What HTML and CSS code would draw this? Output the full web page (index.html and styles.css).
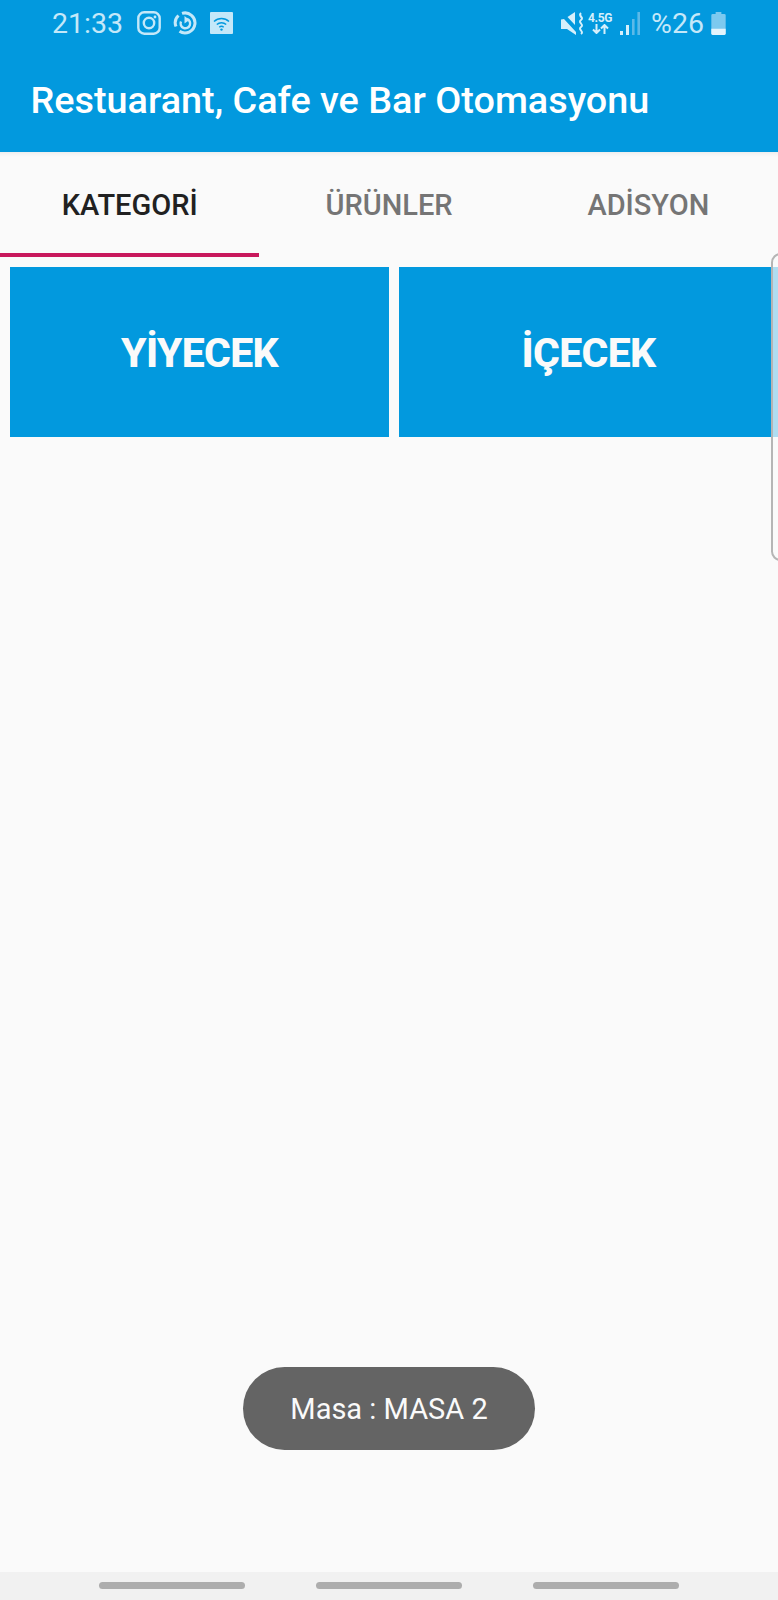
FILE: index.html
```html
<!DOCTYPE html>
<html lang="tr">
<head>
<meta charset="utf-8">
<title>Restuarant, Cafe ve Bar Otomasyonu</title>
<link rel="stylesheet" href="styles.css">
</head>
<body>
<div class="screen">
  <header class="appbar">
    <div class="status">
      <div class="status-left">
        <span class="time">21:33</span>
        <svg class="ic ic-insta" viewBox="0 0 24 24"><rect x="1.3" y="1.3" width="21.400" height="21.400" rx="6" fill="none" stroke="#c4e8f9" stroke-width="2.400"/><circle cx="12" cy="12" r="5.200" fill="none" stroke="#c4e8f9" stroke-width="2.400"/><circle cx="18" cy="6" r="1.400" fill="#c4e8f9"/></svg>
        <svg class="ic ic-sync" viewBox="0 0 24 24"><path d="M9 2.400A10 10 0 1 1 6.500 20.300" fill="none" stroke="#c4e8f9" stroke-width="3"/><path d="M3 15.500A10 10 0 0 1 5.500 4.500" fill="none" stroke="#c4e8f9" stroke-width="3"/><path d="M8 10.500A4.800 4.800 0 1 0 14 8" fill="none" stroke="#c4e8f9" stroke-width="2.400"/><path d="M11.500 5v7.500l5-3.500z" fill="#c4e8f9"/></svg>
        <svg class="ic ic-wifi" viewBox="0 0 23 22"><rect width="23" height="22" rx="1" fill="#c4e8f9"/><path d="M4 9.500a11 11 0 0 1 15 0M6.800 12.500a7 7 0 0 1 9.400 0M9.300 15.200a3.400 3.400 0 0 1 4.400 0" fill="none" stroke="#0299de" stroke-width="1.500"/><circle cx="11.500" cy="17.600" r="1.200" fill="#0299de"/></svg>
      </div>
      <div class="status-right">
        <svg class="ic ic-mute" viewBox="0 0 23 23"><path d="M0 7.500l3-.5 12 13v3L6 17H0z" fill="#d5effb"/><path d="M6.500 5L14 0v13z" fill="#d5effb"/><path d="M20 1c-3.500 3 3.500 4.500 0 7s3.500 4.500 0 7 3.500 4.500 0 7" fill="none" stroke="#d5effb" stroke-width="2"/></svg>
        <div class="net">
          <span class="net-label">4.5G</span>
          <svg class="ic-arrows" viewBox="0 0 17 10"><path d="M4.500 0v9M1 5.500L4.500 9 8 5.500M12.500 10V1M9 4.500L12.500 1 16 4.500" fill="none" stroke="#d5effb" stroke-width="2"/></svg>
        </div>
        <svg class="ic ic-signal" viewBox="0 0 20 23"><rect x="0" y="19" width="3" height="4" fill="#d5effb"/><rect x="6" y="13" width="3" height="10" fill="#d5effb"/><rect x="12" y="7" width="2.600" height="16" fill="#5cb9e8"/><rect x="17.400" y="0" width="2.600" height="23" fill="#5cb9e8"/></svg>
        <span class="battery-text">%26</span>
        <svg class="ic ic-battery" viewBox="0 0 15 24"><path d="M4.500 0h6v2h3a1.500 1.500 0 0 1 1.500 1.500V22.500a1.500 1.500 0 0 1-1.500 1.500h-12A1.500 1.500 0 0 1 0 22.500V3.500A1.500 1.500 0 0 1 1.500 2h3z" fill="#7cc9ef"/><path d="M0 17.500h15v5a1.500 1.500 0 0 1-1.500 1.500h-12A1.500 1.500 0 0 1 0 22.500z" fill="#e3f4fc"/></svg>
      </div>
    </div>
    <h1 class="title">Restuarant, Cafe ve Bar Otomasyonu</h1>
  </header>

  <nav class="tabs">
    <a class="tab tab-active">KATEGORİ</a>
    <a class="tab">ÜRÜNLER</a>
    <a class="tab">ADİSYON</a>
  </nav>

  <main class="content">
    <div class="categories">
      <button class="category">YİYECEK</button>
      <button class="category">İÇECEK</button>
    </div>
    <div class="edge-panel"></div>
    <div class="toast">Masa : MASA 2</div>
  </main>

  <footer class="navbar">
    <span class="nav-pill"></span>
    <span class="nav-pill"></span>
    <span class="nav-pill"></span>
  </footer>
</div>
</body>
</html>
```
FILE: styles.css
```css
* { box-sizing: border-box; }
html, body { margin: 0; padding: 0; }
body { font-family: Roboto, "Liberation Sans", sans-serif; background: #fafafa; overflow: hidden; }
.screen { width: 778px; height: 1600px; display: flex; flex-direction: column; overflow: hidden; }

.appbar { height: 152px; background: #0299de; color: #fff; flex: none; }
.status { height: 46px; padding: 0 52px; display: flex; justify-content: space-between; align-items: center; color: #c4e8f9; }
.status-left, .status-right { display: flex; align-items: center; }
.time { font-size: 28.500px; margin-right: 14px; }
.ic { display: block; flex: none; }
.ic-insta { width: 24px; height: 24px; margin-right: 12px; }
.ic-sync { width: 24px; height: 24px; margin-right: 13px; }
.ic-wifi { width: 23px; height: 22px; }
.ic-mute { width: 23px; height: 23px; margin-right: 4px; }
.net { width: 24px; display: flex; flex-direction: column; align-items: center; margin-right: 8px; }
.net-label { font-size: 12px; font-weight: 700; line-height: 12px; letter-spacing: -.3px; color: #d5effb; }
.ic-arrows { width: 17px; height: 10px; display: block; }
.ic-signal { width: 20px; height: 23px; margin-right: 11px; }
.battery-text { font-size: 28.500px; margin-right: 7px; }
.ic-battery { width: 15px; height: 23px; }

.title { margin: 0; padding-left: 30.500px; font-size: 37.800px; font-weight: 500; line-height: 108px; height: 106px; white-space: nowrap; }

.tabs { display: grid; grid-template-columns: repeat(3, 1fr); height: 105px; flex: none; box-shadow: inset 0 6px 5px -5px rgba(0,0,0,.08); }
.tab { display: flex; align-items: center; justify-content: center; font-size: 29px; font-weight: 500; color: #757575; padding-top: 5px; border-bottom: 4px solid transparent; }
.tab-active { color: #212121; border-bottom-color: #c8185c; }

.content { flex: 1; position: relative; }
.categories { display: grid; grid-template-columns: 379px 379px; gap: 10px; padding: 10px 0 0 10px; }
.category { height: 170px; background: #0299de; border: 0; padding: 2px 0 0; color: #fafafa; font-family: inherit; font-size: 41px; font-weight: 800; letter-spacing: -.7px; }

.edge-panel { position: absolute; top: -4px; right: -12px; width: 19px; height: 308px; border: 2px solid #b5b5b5; border-radius: 10px; background: rgba(250,250,250,.7); }

.toast { position: absolute; left: 243px; top: 1110px; width: 292px; height: 83px; border-radius: 42px; background: #646464; color: #fafafa; font-size: 29px; display: flex; align-items: center; justify-content: center; }

.navbar { height: 28px; flex: none; background: #f1f1f1; display: flex; justify-content: center; gap: 71px; padding-top: 10px; }
.nav-pill { width: 146px; height: 7px; border-radius: 4px; background: #adadad; }
```
